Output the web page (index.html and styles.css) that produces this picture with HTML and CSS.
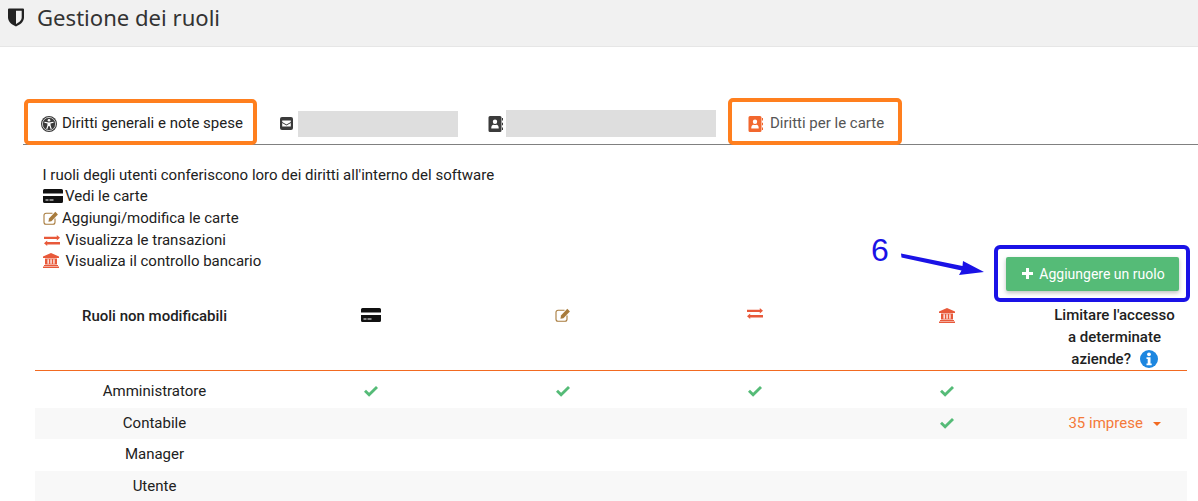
FILE: index.html
```html
<!DOCTYPE html>
<html lang="it">
<head>
<meta charset="utf-8">
<title>Gestione dei ruoli</title>
<link rel="stylesheet" href="styles.css">
</head>
<body>
<svg class="defs" width="0" height="0" aria-hidden="true">
  <symbol id="i-card" viewBox="0 0 20 14"><path fill-rule="evenodd" d="M1.500 0h17A1.500 1.500 0 0 1 20 1.500V4.500H0V1.500A1.500 1.500 0 0 1 1.500 0zM0 7h20v5.500a1.500 1.500 0 0 1-1.500 1.500h-17A1.500 1.500 0 0 1 0 12.500zM2.500 10.500v1h3v-1zM6.500 10.500v1h4v-1z"/></symbol>
  <symbol id="i-edit" viewBox="0 0 16 14"><path fill="none" stroke="currentColor" stroke-width="1.100" d="M12 7.500v3.700a2 2 0 0 1-2 2H3a2 2 0 0 1-2-2V4.300a2 2 0 0 1 2-2h6.500"/><path d="M6 7.500 12.300 .8l2.600 2.600-6.500 6.800-3 .5z"/></symbol>
  <symbol id="i-exchange" viewBox="0 0 16 11"><path d="M0 1.700h12.800V0L16 2.800l-3.200 2.700V4H0zM16 7v2.400H3.200v1.600L0 8.200l3.200-2.700V7z"/></symbol>
  <symbol id="i-bank" viewBox="0 0 16 15"><path fill-rule="evenodd" d="M8 0l8 3.500V5H0V3.500zM2 5.500h12v6H2zM4.500 6.200v4.600h1.300V6.200zM7.400 6.200v4.600h1.300V6.200zM10.300 6.200v4.600h1.300V6.200zM1 12h14v1H1zM0 13.500h16V15H0z"/></symbol>
  <symbol id="i-check" viewBox="0 0 14 11"><path d="M5.100 10.800 0 5.700l2-2 3.100 3.100L12 0l2 2z"/></symbol>
  <symbol id="i-book" viewBox="0 0 15 16"><path fill-rule="evenodd" d="M2 0h10a1.500 1.500 0 0 1 1.500 1.500v13A1.500 1.500 0 0 1 12 16H2a1.500 1.500 0 0 1-1.500-1.500v-13A1.500 1.500 0 0 1 2 0zM7 3.500a2.200 2.200 0 1 0 0 4.400 2.200 2.200 0 0 0 0-4.400zM3.300 12.500h7.400c.3-2.300-1-3.800-2.200-3.800-.5.300-.9.400-1.500.4s-1-.1-1.500-.4c-1.200 0-2.500 1.500-2.200 3.800z"/><path d="M14 2h1v2.500h-1zM14 6.700h1v2.500h-1zM14 11.400h1v2.500h-1z"/></symbol>
</svg>

<header class="page-head">
  <svg class="shield" viewBox="0 0 16 18" aria-hidden="true"><path fill-rule="evenodd" d="M1 0h14a1 1 0 0 1 1 1v8c0 4.500-4.500 7.500-8 9-3.500-1.500-8-4.500-8-9V1a1 1 0 0 1 1-1zM8 2.300v13.200c2.500-1.300 5.700-3.400 5.700-6.500V2.300z"/></svg>
  <h1 class="page-title">Gestione dei ruoli</h1>
</header>

<main class="content">
  <nav class="tabs">
    <div class="tab tab-general">
      <svg class="tab-icon access" viewBox="0 0 16 16" aria-hidden="true"><circle cx="8" cy="8" r="8" fill="#3a3a3a"/><circle cx="8" cy="8" r="6.600" fill="none" stroke="#fff" stroke-width=".7"/><circle cx="8" cy="4.300" r="1.300" fill="#fff"/><path fill="#fff" d="M3.600 5.800 8 6.500l4.400-.7.300 1-3.200.8.200 2.200 1.100 3.300-1 .4L8.500 10h-1l-1.300 3.500-1-.4 1.100-3.300.2-2.200-3.200-.8z"/></svg>
      <span>Diritti generali e note spese</span>
    </div>
    <div class="tab tab-mail">
      <svg class="tab-icon mail" viewBox="0 0 13 13" aria-hidden="true"><rect width="13" height="13" rx="2" fill="#3b3b3b"/><path fill="#fff" d="M2.200 3.500h8.600v1.400L6.500 7.500 2.200 4.900zM2.200 6l4.300 2.600L10.800 6v3.500H2.200z"/></svg>
      <span class="redacted redacted-short"></span>
    </div>
    <div class="tab tab-contact">
      <svg class="tab-icon book" aria-hidden="true"><use href="#i-book"/></svg>
      <span class="redacted redacted-long"></span>
    </div>
    <div class="tab tab-cards">
      <svg class="tab-icon book book-accent" aria-hidden="true"><use href="#i-book"/></svg>
      <span>Diritti per le carte</span>
    </div>
  </nav>

  <section class="intro-row">
    <div class="intro">
      <p>I ruoli degli utenti conferiscono loro dei diritti all'interno del software</p>
      <p><svg class="legend-icon ic-card" aria-hidden="true"><use href="#i-card"/></svg>Vedi le carte</p>
      <p><svg class="legend-icon ic-edit" aria-hidden="true"><use href="#i-edit"/></svg>Aggiungi/modifica le carte</p>
      <p><svg class="legend-icon ic-exchange" aria-hidden="true"><use href="#i-exchange"/></svg>Visualizza le transazioni</p>
      <p><svg class="legend-icon ic-bank" aria-hidden="true"><use href="#i-bank"/></svg>Visualiza il controllo bancario</p>
    </div>
    <button class="add-role" type="button"><svg class="plus" viewBox="0 0 11 11" aria-hidden="true"><path d="M4 0h3v4h4v3H7v4H4V7H0V4h4z"/></svg>Aggiungere un ruolo</button>
  </section>

  <section class="roles">
    <div class="row row-head">
      <div class="cell head-title">Ruoli non modificabili</div>
      <div class="cell"><svg class="perm-icon ic-card" aria-hidden="true"><use href="#i-card"/></svg></div>
      <div class="cell"><svg class="perm-icon ic-edit" aria-hidden="true"><use href="#i-edit"/></svg></div>
      <div class="cell"><svg class="perm-icon ic-exchange" aria-hidden="true"><use href="#i-exchange"/></svg></div>
      <div class="cell"><svg class="perm-icon ic-bank" aria-hidden="true"><use href="#i-bank"/></svg></div>
      <div class="cell head-limit">Limitare l'accesso<br>a determinate<br>aziende?
        <svg class="info" viewBox="0 0 18 18" aria-hidden="true"><circle cx="9" cy="9" r="9" fill="#1c86e0"/><circle cx="9" cy="4.300" r="1.900" fill="#fff"/><path fill="#fff" d="M6.500 7.300h4v6.200h1.200v1.800H6.500v-1.800h1.200v-4.400H6.500z"/></svg>
      </div>
    </div>
    <div class="row row-first">
      <div class="cell">Amministratore</div>
      <div class="cell"><svg class="check" aria-hidden="true"><use href="#i-check"/></svg></div>
      <div class="cell"><svg class="check" aria-hidden="true"><use href="#i-check"/></svg></div>
      <div class="cell"><svg class="check" aria-hidden="true"><use href="#i-check"/></svg></div>
      <div class="cell"><svg class="check" aria-hidden="true"><use href="#i-check"/></svg></div>
      <div class="cell"></div>
    </div>
    <div class="row row-alt">
      <div class="cell">Contabile</div>
      <div class="cell"></div>
      <div class="cell"></div>
      <div class="cell"></div>
      <div class="cell"><svg class="check" aria-hidden="true"><use href="#i-check"/></svg></div>
      <div class="cell companies">35 imprese <span class="caret"></span></div>
    </div>
    <div class="row">
      <div class="cell">Manager</div>
      <div class="cell"></div><div class="cell"></div><div class="cell"></div><div class="cell"></div><div class="cell"></div>
    </div>
    <div class="row row-alt">
      <div class="cell">Utente</div>
      <div class="cell"></div><div class="cell"></div><div class="cell"></div><div class="cell"></div><div class="cell"></div>
    </div>
  </section>
</main>

<div class="mark mark-orange mark-general"></div>
<div class="mark mark-orange mark-cards"></div>
<div class="mark mark-blue"></div>
<div class="step-number">6</div>
<svg class="step-arrow" viewBox="0 0 90 24" aria-hidden="true"><path d="M0 .5.500 4.500 60.500 17.500 58 22 83 19 62 8 61.500 13z"/></svg>
</body>
</html>
```

FILE: styles.css
```css
* { box-sizing: border-box; }
html, body { margin: 0; height: 501px; overflow: hidden; }
body { position: relative; background: #fff; color: #212121; font: 15px/21.6px Roboto, sans-serif; }
.defs { position: absolute; }

.page-head { display: flex; align-items: center; height: 47px; padding: 0 0 12px 8px; background: #f1f1f1; border-bottom: 1px solid #e6e6e6; }
.shield { width: 16px; height: 19px; fill: #222; }
.page-title { margin: 0 0 0 13px; font: 400 22.100px/28px "Noto Sans", sans-serif; color: #333; }

.content { padding-left: 23px; }
.tabs { display: flex; align-items: center; height: 46px; margin-top: 52px; border-bottom: 1px solid #808080; }
.tab { display: flex; align-items: center; height: 45px; padding: 4px 18px 0; }
.tab-mail { margin-left: 1px; padding-right: 12px; }
.tab-contact { padding-right: 15px; }
.tab-cards { padding-left: 17px; color: #555; }
.tab-icon { flex: none; }
.access { width: 16px; height: 16px; margin-right: 5px; }
.mail { width: 13px; height: 13px; margin-right: 5px; }
.book { width: 15px; height: 16px; margin-right: 3px; fill: #3b3b3b; }
.book-accent { margin-right: 7px; fill: #f2672e; }
.redacted { display: block; height: 26px; background: #dedede; }
.redacted-short { width: 160px; }
.redacted-long { width: 210px; height: 27px; }

.intro-row { display: flex; justify-content: space-between; align-items: flex-end; padding: 19.800px 19px 0 19.500px; }
.intro { padding-bottom: 18.200px; }
.intro p { margin: 0; }
.legend-icon { vertical-align: -2px; }
.ic-card { width: 20px; height: 14px; fill: #111; }
.ic-edit { width: 16px; height: 14px; fill: #a87b3c; color: #a87b3c; }
.ic-exchange { width: 16px; height: 11px; fill: #e8593a; }
.ic-bank { width: 16px; height: 15px; fill: #e8593a; }
.intro .ic-card { margin-right: 2.500px; }
.intro .ic-edit { margin-right: 3.500px; }
.intro .ic-exchange { margin: 0 5.500px 0 1.500px; vertical-align: -1px; }
.intro .ic-bank { margin: 0 6.500px 0 .5px; }
.perm-icon { display: block; margin: 0 auto; }

.add-role { display: flex; align-items: center; justify-content: center; width: 173px; height: 34px; padding: 0 0 0 2px; border: 0; border-radius: 2px; background: #55bb77; color: #fff; font: 14px/34px Roboto, sans-serif; box-shadow: 0 2px 4px rgba(0,0,0,.25); }
.plus { width: 11px; height: 11px; margin-right: 6px; fill: #fff; }

.roles { margin: 13px 11px 0 12px; }
.row { display: grid; grid-template-columns: 240px 192px 192px 192px 191px 145px; height: 31.500px; align-items: center; text-align: center; }
.row .cell:first-child { padding-right: 1px; }
.row-head { height: 67px; align-items: start; border-bottom: 1px solid #f26a21; }
.row-head .perm-icon { margin-top: 4px; }
.row-first { height: 37px; padding-top: 4.500px; }
.row-alt { background: #f8f8f8; }
.head-title, .head-limit { font-weight: 500; }
.head-title { padding-top: 2px; }
.head-limit { line-height: 22px; }
.check { display: block; width: 14px; height: 11px; margin: 0 auto; fill: #55bb77; }
.info { width: 18px; height: 18px; margin-left: 5px; vertical-align: -4px; }
.companies { color: #f47a3a; white-space: nowrap; }
.caret { display: inline-block; width: 0; height: 0; margin-left: 6px; vertical-align: 2px; border: 4px solid transparent; border-top-color: #f26a21; border-bottom: 0; }

.mark { position: absolute; }
.mark-orange { border: 4px solid #ff7f1e; border-radius: 5px; background: transparent; }
.mark-general { left: 24px; top: 99px; width: 233px; height: 46px; }
.mark-cards { left: 728px; top: 98px; width: 174px; height: 47px; }
.mark-blue { left: 994px; top: 245px; width: 196px; height: 57px; border: 4px solid #1a12e6; border-radius: 6px; }
.step-number { position: absolute; left: 871px; top: 232px; font: 32px/36px "Liberation Sans", sans-serif; color: #1a12e6; }
.step-arrow { position: absolute; left: 901px; top: 253px; width: 90px; height: 24px; fill: #1a12e6; }
```
